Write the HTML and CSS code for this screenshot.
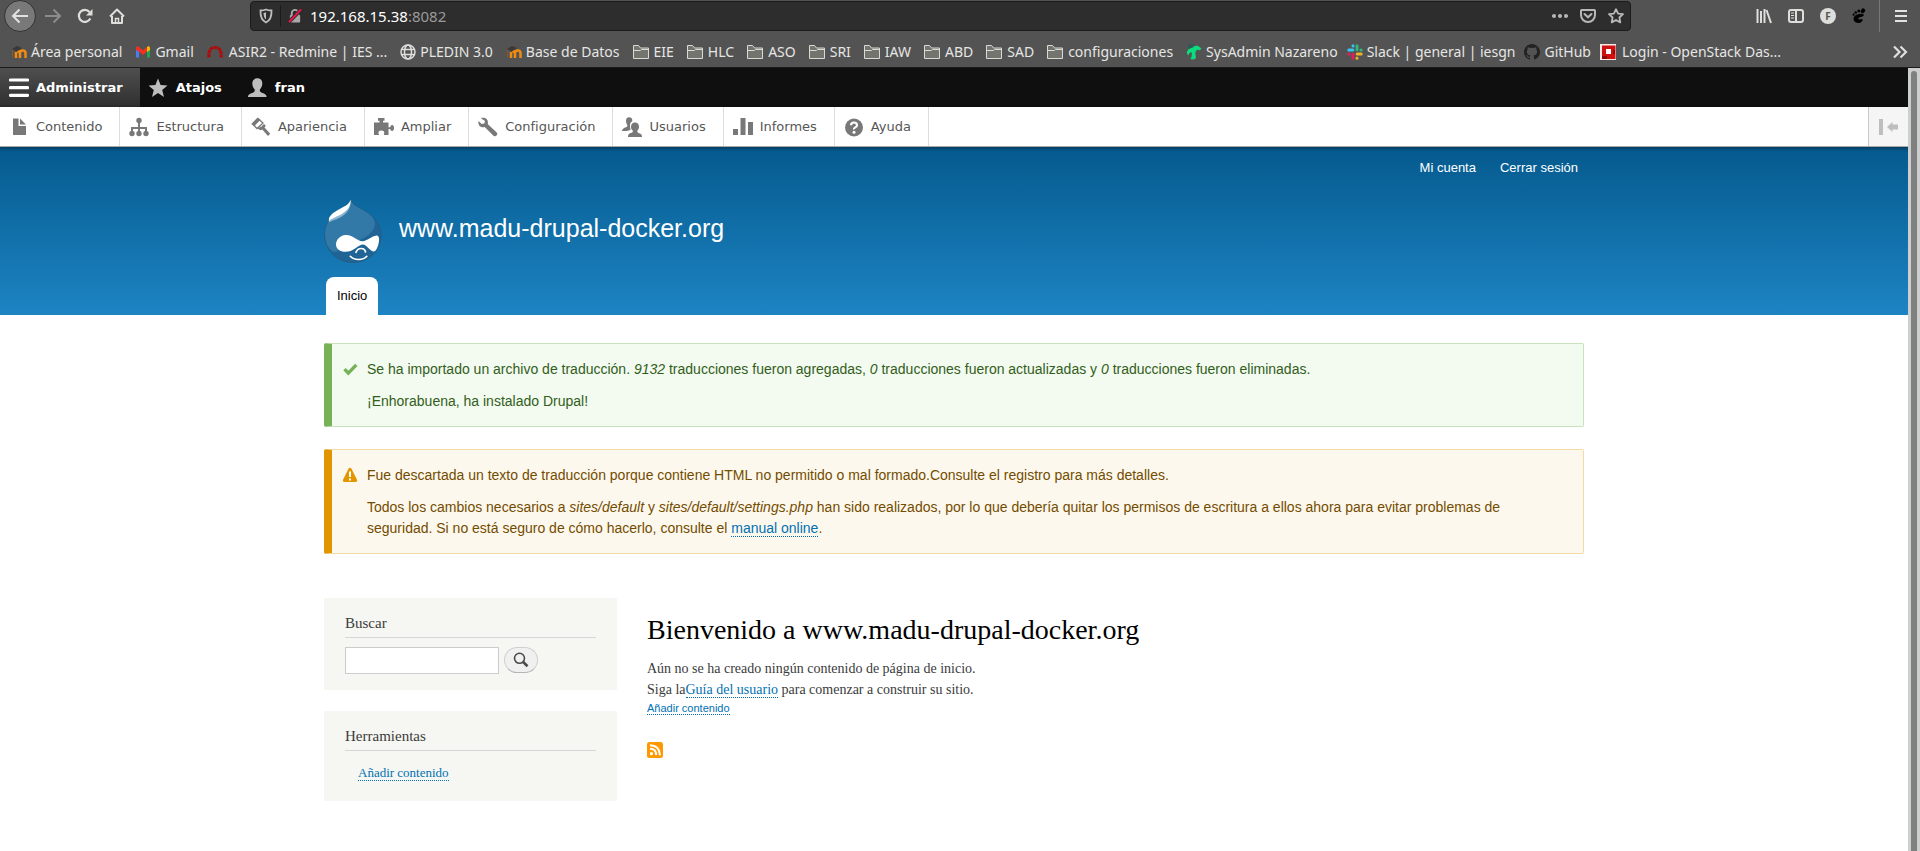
FILE: index.html
```html
<!DOCTYPE html>
<html lang="es">
<head>
<meta charset="utf-8">
<title>Bienvenido a www.madu-drupal-docker.org</title>
<link rel="stylesheet" href="styles.css">
</head>
<body>
<svg class="defs" aria-hidden="true">
  <symbol id="folder" viewBox="0 0 16 16"><path d="M.5 14.500v-13h5l2 2.500h8v10.500z" fill="#74746f" stroke="#d9d9d6"/><path d="M.5 6.500h7l1-1h7" fill="none" stroke="#d9d9d6"/></symbol>
  <symbol id="moodle" viewBox="0 0 16 16"><path d="M5 14V8M9 14V9q0-2.500 2.700-2.500T14.500 9v5M9 10q0-3-3-3" fill="none" stroke="#f28c0f" stroke-width="2.500"/><path d="M1 5l5-3 5 2-5 3.500z" fill="#3b3836"/><path d="M1.500 6v7" stroke="#8a5a25"/></symbol>
</svg>
<div class="browser">
  <div class="navbar">
    <div class="nav-buttons">
      <button class="back" aria-label="Atrás"><svg width="18" height="16" viewBox="0 0 18 16"><path d="M17 8H2M8.500 1.500L2 8l6.500 6.500" fill="none" stroke="#e2e2e0" stroke-width="2"/></svg></button>
      <button aria-label="Adelante"><svg width="18" height="16" viewBox="0 0 18 16"><path d="M1 8h15M9.500 1.500L16 8l-6.500 6.500" fill="none" stroke="#8b8b8b" stroke-width="2"/></svg></button>
      <button aria-label="Recargar"><svg width="16" height="16" viewBox="0 0 16 16"><path d="M13.300 10.500A6 6 0 1 1 12.500 4" fill="none" stroke="#dededc" stroke-width="2.200"/><path d="M15.500 1v6.500H9z" fill="#dededc"/></svg></button>
      <button aria-label="Inicio"><svg width="16" height="16" viewBox="0 0 16 16"><path d="M1 8.500L8 1.500l7 7M3 8v7h10V8" fill="none" stroke="#dededc" stroke-width="2" stroke-linejoin="round"/><path d="M6.500 15v-4.500h3V15" fill="none" stroke="#dededc" stroke-width="1.500"/></svg></button>
    </div>
    <div class="urlbar">
      <svg class="shield" width="14" height="16" viewBox="0 0 14 16"><path d="M7 1.500c2 1 4 1 5.500 1 .3 6-1.500 10-5.500 12C3 12.500 1.200 8.500 1.500 2.500c1.500 0 3.500 0 5.500-1z" fill="none" stroke="#bdbdbd" stroke-width="1.800"/><path d="M7 4.300c-1 .4-1.700.5-2.500.6.1 3 .9 5.300 2.500 6.600z" fill="#bdbdbd"/></svg>
      <svg class="lock" width="15" height="16" viewBox="0 0 15 16"><path d="M4 8V5a3.500 3.500 0 0 1 7 0v3" fill="none" stroke="#a8a8a8" stroke-width="2"/><rect x="2" y="7" width="11" height="8" rx="1" fill="#a8a8a8"/><path d="M1 14.500L14 1" stroke="#2d2d2d" stroke-width="4"/><path d="M1 14.500L14 1" stroke="#f5144a" stroke-width="2"/></svg>
      <div class="url" role="textbox" contenteditable="true" spellcheck="false" aria-label="Dirección">192.168.15.38<span class="port">:8082</span></div>
      <button aria-label="Más acciones"><svg width="16" height="16" viewBox="0 0 16 16"><g fill="#b9b9b9"><circle cx="2" cy="8" r="2"/><circle cx="8" cy="8" r="2"/><circle cx="14" cy="8" r="2"/></g></svg></button>
      <button aria-label="Pocket"><svg width="16" height="16" viewBox="0 0 16 16"><path d="M1.800 2h12.400q.8 0 .8.800V7A7 7 0 0 1 1 7V2.800q0-.8.800-.8z" fill="none" stroke="#b9b9b9" stroke-width="2"/><path d="M4.500 6L8 9.300 11.500 6" fill="none" stroke="#b9b9b9" stroke-width="2" stroke-linecap="round"/></svg></button>
      <button aria-label="Marcador"><svg width="16" height="16" viewBox="0 0 16 16"><path d="M8 1.200l2.100 4.400 4.900.6-3.600 3.300.9 4.900L8 12l-4.300 2.400.9-4.900L1 6.200l4.900-.6z" fill="none" stroke="#b9b9b9" stroke-width="1.800" stroke-linejoin="round"/></svg></button>
    </div>
    <div class="tools">
      <button aria-label="Biblioteca"><svg width="16" height="16" viewBox="0 0 16 16"><path d="M1.500 1v14M5 3v12M8.500 1v14M10.500 2l4.500 13" stroke="#dededc" stroke-width="2"/></svg></button>
      <button aria-label="Barra lateral"><svg width="16" height="16" viewBox="0 0 16 16"><rect x="1" y="2" width="14" height="12" rx="2" fill="none" stroke="#dededc" stroke-width="2"/><path d="M8 2v12" stroke="#dededc" stroke-width="2"/><path d="M3 5h3M3 7.500h3M3 10h3" stroke="#dededc"/></svg></button>
      <button class="account" aria-label="Cuenta">F</button>
      <button aria-label="GNOME"><svg width="14" height="16" viewBox="0 0 14 16"><path d="M11.500 6.300C10 5 4 5.500 2 9c-1.500 3 1 6 4.500 6 2.500 0 4.500-2 4-3.500-.5-1-2 .2-3.500-.2-1.500-.5-.5-2 2-2.300C11 8.700 12.500 7.500 11.500 6.300z" fill="#000"/><ellipse cx="11" cy="2.800" rx="2" ry="2.500" transform="rotate(30 11 2.800)" fill="#000"/><circle cx="6.800" cy="3" r="1.500" fill="#000"/><circle cx="3.700" cy="4.500" r="1.300" fill="#000"/><circle cx="1.600" cy="6.700" r="1.100" fill="#000"/></svg></button>
    </div>
    <button class="menu" aria-label="Menú"><svg width="12" height="14" viewBox="0 0 12 14"><path d="M0 2h12M0 7h12M0 12h12" stroke="#e2e2e0" stroke-width="2"/></svg></button>
  </div>
  <nav class="bookmarks" aria-label="Marcadores">
    <div class="group">
      <a href="#"><svg><use href="#moodle"/></svg>Área personal</a>
      <a href="#"><svg viewBox="0 0 16 16"><path d="M1 13.500V4l3 2v7.500z" fill="#4a7cf4"/><path d="M12 13.500V6l3-2v9.500z" fill="#16a850"/><path d="M1 6V3.500q1.500-2 3-.5l4 3.300 4-3.300v4.500L8 11 4 7.800z" fill="#ee3124"/><path d="M12 3q2-1.700 3 .5V6l-3 2z" fill="#fbbc04"/></svg>Gmail</a>
      <a class="wide" href="#"><svg viewBox="0 0 16 16"><path d="M2 13.500Q1 3.500 8 3.500t6 10" fill="none" stroke="#b00b0b" stroke-width="3.200" stroke-dasharray="3.500 .6"/></svg>ASIR2 - Redmine | IES ...</a>
      <a href="#"><svg viewBox="0 0 16 16" fill="none" stroke="#dededc" stroke-width="1.500"><circle cx="8" cy="8" r="7"/><ellipse cx="8" cy="8" rx="3.500" ry="7"/><path d="M1.500 5.500h13M1.500 10.500h13"/></svg>PLEDIN 3.0</a>
      <a href="#"><svg><use href="#moodle"/></svg>Base de Datos</a>
    </div>
    <div class="group folders">
      <a href="#"><svg><use href="#folder"/></svg>EIE</a>
      <a href="#"><svg><use href="#folder"/></svg>HLC</a>
      <a href="#"><svg><use href="#folder"/></svg>ASO</a>
      <a href="#"><svg><use href="#folder"/></svg>SRI</a>
      <a href="#"><svg><use href="#folder"/></svg>IAW</a>
      <a href="#"><svg><use href="#folder"/></svg>ABD</a>
      <a href="#"><svg><use href="#folder"/></svg>SAD</a>
      <a href="#"><svg><use href="#folder"/></svg>configuraciones</a>
    </div>
    <div class="group sites">
      <a href="#"><svg viewBox="0 0 16 16"><path d="M.8 9.500C1 6.500 3 4 6.500 3.800 8 1.500 12 .5 14 3.500l1.500 1-2 2-1.500-1c-2 .5-3 2.500-2.500 5l.5 3.500-2 1.500-4-.6 1.300-1.400C6 11 6 9.500 5.500 8L3 9.500l-.5 2z" fill="#0bdc7c"/><path d="M3 .5l2 1.800L7.500.5M2 3.500h3" fill="none" stroke="#17615c" stroke-width="1.500"/></svg>SysAdmin Nazareno</a>
      <a href="#"><svg viewBox="0 0 16 16" fill="none" stroke-width="3" stroke-linecap="round"><path d="M1.800 6h4M6 1.800v.3" stroke="#36c5f0"/><path d="M10 1.800v4M14.200 6h-.3" stroke="#2eb67d"/><path d="M14.200 10h-4M10 14.200v-.3" stroke="#ecb22e"/><path d="M6 14.200v-4M1.800 10h.3" stroke="#e01e5a"/></svg>Slack | general | iesgn</a>
      <a href="#"><svg viewBox="0 0 16 16"><path fill="#222" d="M8 0C3.600 0 0 3.600 0 8c0 3.500 2.300 6.500 5.500 7.600.4.100.5-.2.500-.4v-1.500c-2 .4-2.600-.5-2.800-1-.1-.2-.5-1-.8-1.100-.3-.2-.7-.5 0-.5.600 0 1.100.6 1.200.8.700 1.200 1.900.9 2.400.7.100-.5.300-.9.500-1.100C4.700 11.300 2.900 10.600 2.900 7.600c0-.9.300-1.600.8-2.100-.1-.2-.4-1 .1-2.200 0 0 .7-.2 2.200.8a7.500 7.500 0 0 1 4 0c1.500-1 2.200-.8 2.200-.8.400 1.100.2 2 .1 2.200.5.600.8 1.300.8 2.100 0 3.100-1.900 3.700-3.700 3.900.3.300.600.800.6 1.500v2.200c0 .2.100.5.500.4A8 8 0 0 0 8 0z"/></svg>GitHub</a>
      <a class="wide" href="#"><svg viewBox="0 0 16 16"><path d="M0 0h16v16H0z" fill="#f7e9e7"/><path d="M2 1.500h13.500V15H2z" fill="#cf1010"/><path d="M2 12h5v3H2zM13 6h2v4h-2z" fill="#8c0a0a"/><path d="M6 5h5v5H6z" fill="#fff"/></svg>Login - OpenStack Das...</a>
    </div>
    <button class="more" aria-label="Más marcadores"><svg viewBox="0 0 16 16"><path d="M2 2.500L7.500 8 2 13.500M8.500 2.500L14 8l-5.500 5.500" fill="none" stroke="#dededc" stroke-width="2.200"/></svg></button>
  </nav>
</div>
<div class="viewport">
  <div class="page">
    <nav class="toolbar" aria-label="Barra de administración">
      <a class="active" href="#"><svg viewBox="0 0 20 20"><path d="M1.500 2h17M1.500 9.700h17M1.500 17.300h17" stroke="#fff" stroke-width="3.200" stroke-linecap="round"/></svg>Administrar</a>
      <a href="#"><svg viewBox="0 0 20 20"><path d="M9 .5l2.600 6.600 6.900.4-5.300 4.400 1.800 7L9 15.100 3 18.900l1.800-7L-.5 7.500l6.900-.4z" fill="#bebebe"/></svg>Atajos</a>
      <a href="#"><svg viewBox="0 0 20 20"><path d="M9.300.3c3.300 0 5 2.200 5 5.200 0 2.600-1 4.500-2.300 5.700-.5 1.500 0 2.600 1.300 3.200 3 1.200 5.300 1.600 5.300 4.600H0c0-3 2.300-3.400 5.300-4.600 1.300-.6 1.800-1.700 1.300-3.200C5.300 10 4.300 8.100 4.300 5.500 4.300 2.500 6 .3 9.300.3z" fill="#bebebe"/></svg>fran</a>
    </nav>
    <nav class="tray" aria-label="Administración">
      <a href="#"><svg viewBox="0 0 20 20"><path d="M4 1.500h5.500V9H17v9H4z"/><path d="M11 1.500L17 7.500h-6z"/></svg>Contenido</a>
      <a href="#"><svg viewBox="0 0 20 20"><circle cx="10" cy="3.500" r="2.700"/><path d="M10 4v14M3 17v-6h14v6" fill="none" stroke="#787878" stroke-width="2"/><circle cx="3" cy="16.500" r="2.700"/><circle cx="10" cy="16.500" r="2.700"/><circle cx="17" cy="16.500" r="2.700"/></svg>Estructura</a>
      <a href="#"><svg viewBox="0 0 20 20"><path d="M7 1.500L12 6l-6 5.500-4.500-4.500z" fill="#fff" stroke="#787878" stroke-width="1.300"/><path d="M.3 7L6.500.8l3 2L3.500 9zM10.500 9.500L13 7l1.800 1.800-1.300 1.700 5.700 6.200-2.200 2.300-5.700-6.500-2 .7-3-2z"/></svg>Apariencia</a>
      <a href="#"><svg viewBox="0 0 20 20"><path d="M0 5.500h5.500V3.800H4V1h6.500v2.800H9v1.700h5.500v4.700h1.700q.3-2.200 2-2.200T20 11t-1.800 3-2-2h-1.700v6H9.800q1.500-4.500-2.500-4.500T5 18H0z"/></svg>Ampliar</a>
      <a href="#"><svg viewBox="0 0 20 20"><path d="M3 1.300C7-.5 11 3 9.700 7l9 8.500q1.200 1.500-.2 3t-3 .2L6.700 10C3 11.500-.5 8 .6 4l3 3 2.700-.6L7 4z"/></svg>Configuración</a>
      <a href="#"><svg viewBox="0 0 20 20"><path d="M7 .3c2.500 0 3.500 1.500 3.300 4q-2.500 1-2.300 4.500 0 2 .7 4L5 14H0q0-2.500 4.500-4 1.500-.7.700-2Q4 6.500 4 3.800 4 .3 7 .3z"/><path d="M13 5.500c2.700 0 4 1.600 4 4.300 0 2-.8 3-1.500 3.700-.5 1.300 0 2 1 2.500 2 .7 3.500 1 3.500 4H6c0-3 1.500-3.500 3.500-4.200 1-.4 1.700-1 1.200-2.300C10 12.800 9 12 9 9.800c0-2.700 1.300-4.300 4-4.300z"/></svg>Usuarios</a>
      <a href="#"><svg viewBox="0 0 20 20"><path d="M0 12h5v6H0zM7.500 1h5v17h-5zM15 5h5v13h-5z"/></svg>Informes</a>
      <a href="#"><svg viewBox="0 0 20 20"><circle cx="10" cy="10.500" r="9"/><path d="M7 8.300Q7 5.500 10 5.500t3 2.700q0 1.300-1.700 2.200T10 12.300" fill="none" stroke="#fff" stroke-width="2.200"/><circle cx="10" cy="15.200" r="1.500" fill="#fff"/></svg>Ayuda</a>
      <button class="orient" aria-label="Orientación vertical"><svg viewBox="0 0 20 16"><path d="M0 0h4v16H0zM8 8l5.500-5v2.500H19v5h-5.500V13z" fill="#bebebe"/></svg></button>
    </nav>
    <header class="site-header">
      <div class="container">
        <nav class="user-menu" aria-label="Cuenta de usuario"><a href="#">Mi cuenta</a><a href="#">Cerrar sesión</a></nav>
        <div class="branding">
          <svg class="logo" viewBox="0 0 58 64" role="img" aria-label="Inicio">
            <path d="M26.700.5C28 5 32 7.500 38 10.500 48 16 57 23.500 57 36.500 57 52 44.500 63.500 29 63.500S.7 51.500.7 36C.7 27 5 20 12 15.500 19 11 26 8 26.700.5z" fill="#1f6495" stroke="#285a7d" stroke-width=".8"/>
            <path d="M26.700 1C28 5 32 7.500 38 10.500 45 14 50.500 19 51 24 51 34 40 40 30 43 18 47 15 51 13 52.500 7 55 1 45 1 36 1 27 5 20 12 15.500 19 11 26 8 26.700 1z" fill="#3379a8"/>
            <path d="M26.600 1.500c.3 7-2.600 11.500-8 15.500C13 21 8 21 5 23.500c-1-4 3-8 8-11C19 9 25.500 7 26.600 1.500z" fill="#8db4d0"/>
            <path d="M26.600.3C27 7 24 11 18.500 14.500 13 18 8 19 5 22c-1-4 3-7.500 8-10.500C19 8 25.500 6 26.600.3z" fill="#fff"/>
            <path d="M21.500 36c7.500-.5 12 6.500 17 6.300C43 42 48 37 52.500 36.500c3-.2 3 4.500 2 8.500s-3 8-5 7.500c-4-1-7-6.800-10.500-7-5 0-9 7.300-17.500 7.300C16 52.800 12 50 12 45.500S16 36.300 21.500 36z" fill="#fff"/>
            <path d="M32 53.300c2-5 8.500-5 9.500-.3M26.300 57.300c4 4.500 13 4 16.500 0" fill="none" stroke="#fff" stroke-width="1.700" stroke-linecap="round"/>
          </svg>
          <a class="site-name" href="#">www.madu-drupal-docker.org</a>
        </div>
        <nav class="main-menu" aria-label="Navegación principal"><a href="#">Inicio</a></nav>
      </div>
    </header>
    <main class="container">
      <div class="message status" role="status">
        <svg viewBox="0 0 16 16"><path d="M2.500 8.200l3.800 4 8-8.400" fill="none" stroke="#73b355" stroke-width="3.300"/></svg>
        <div>
          <p>Se ha importado un archivo de traducción. <em>9132</em> traducciones fueron agregadas, <em>0</em> traducciones fueron actualizadas y <em>0</em> traducciones fueron eliminadas.</p>
          <p>¡Enhorabuena, ha instalado Drupal!</p>
        </div>
      </div>
      <div class="message warning" role="alert">
        <svg viewBox="0 0 16 16"><path d="M8 .8q1 0 1.500 1l5.500 11q.7 1.900-1 2.200H2q-1.700-.3-1-2.200l5.500-11q.5-1 1.500-1z" fill="#e29700"/><path d="M7 4.500h2V10H7zM7 11.500h2v2H7z" fill="#fff"/></svg>
        <div>
          <p>Fue descartada un texto de traducción porque contiene HTML no permitido o mal formado.Consulte el registro para más detalles.</p>
          <p>Todos los cambios necesarios a <em>sites/default</em> y <em>sites/default/settings.php</em> han sido realizados, por lo que debería quitar los permisos de escritura a ellos ahora para evitar problemas de seguridad. Si no está seguro de cómo hacerlo, consulte el <a class="link" href="#">manual online</a>.</p>
        </div>
      </div>
      <div class="columns">
        <aside class="sidebar">
          <section class="block">
            <h2><label for="search">Buscar</label></h2>
            <form class="search">
              <input type="search" id="search">
              <button type="button" aria-label="Buscar"><svg viewBox="0 0 16 16"><circle cx="6.500" cy="6.300" r="5" fill="none" stroke="#4a4a4a" stroke-width="1.600"/><path d="M10 9.800l4.500 4.400" stroke="#4a4a4a" stroke-width="2.600"/></svg></button>
            </form>
          </section>
          <section class="block tools-block">
            <h2>Herramientas</h2>
            <ul><li><a class="link" href="#">Añadir contenido</a></li></ul>
          </section>
        </aside>
        <article class="content">
          <h1>Bienvenido a www.madu-drupal-docker.org</h1>
          <p>Aún no se ha creado ningún contenido de página de inicio.<br>Siga la<a class="link" href="#">Guía del usuario</a> para comenzar a construir su sitio.</p>
          <div class="action"><a class="link" href="#">Añadir contenido</a></div>
          <a class="feed" href="#" aria-label="Suscribirse"><svg viewBox="0 0 16 16"><rect width="16" height="16" rx="2.500" fill="#ff9900"/><circle cx="4.500" cy="11.700" r="1.600" fill="#fff"/><path d="M3 6.800q6 0 6.300 6.300M3 3.200q9.600.2 10 10" fill="none" stroke="#fff" stroke-width="2"/></svg></a>
        </article>
      </div>
    </main>
  </div>
  <div class="scroll-track" aria-hidden="true"><div class="scroll-thumb"></div></div>
</div>
</body>
</html>
```
FILE: styles.css
```css
* { box-sizing: border-box; }
html, body { height: 100%; }
body {
  margin: 0;
  display: flex;
  flex-direction: column;
  background: #fff;
  color: #3b3b3b;
  font: 14px/21px "Liberation Serif", serif;
}
a { color: inherit; text-decoration: none; }
button { border: 0; padding: 0; background: none; font: inherit; color: inherit; }
svg { display: block; flex: none; }
p, h1, h2, ul { margin: 0; padding: 0; font-weight: normal; }
ul { list-style: none; }
.defs { position: absolute; width: 0; height: 0; }

/* Browser frame */
.browser {
  background: #535353;
  color: #e6e6e4;
  border-bottom: 1px solid #1b1b1b;
  font: 14px/20px "Noto Sans", sans-serif;
}
.navbar { display: flex; height: 33px; align-items: flex-start; }
.nav-buttons { display: flex; width: 250px; padding-left: 4px; }
.nav-buttons button { width: 32px; height: 32px; display: grid; place-items: center; }
.nav-buttons .back { margin-right: 1px; border: 1px solid #333; border-radius: 50%; background: #797979; }
.urlbar {
  flex: 1;
  display: flex;
  align-items: center;
  height: 30px;
  margin-top: 1px;
  padding: 0 6px 0 8px;
  border: 1px solid #1b1b1b;
  border-radius: 4px;
  background: #2d2d2d;
}
.shield { margin-right: 7px; }
.lock { margin-right: 8px; }
.shield + .lock { border-left: 1px solid #1b1b1b; padding-left: 7px; width: 22px; height: 22px; }
.url { flex: 1; color: #fff; font-size: 15px; }
.port { color: #9a9a9a; }
.urlbar button { margin-left: 12px; }
.tools { display: flex; align-items: center; gap: 16px; height: 32px; padding: 0 13px 0 125px; }
.tools .account {
  width: 16px;
  height: 16px;
  border-radius: 50%;
  background: #dededc;
  color: #535353;
  font-size: 10px;
  font-weight: bold;
  line-height: 16px;
}
.menu { display: flex; align-items: center; height: 32px; border-left: 1px solid #777; padding: 0 13px 0 15px; }
.bookmarks { display: flex; align-items: center; gap: 13px; height: 34px; padding: 3px 12px 0 11px; white-space: nowrap; }
.group { display: flex; gap: 13px; }
.group a { display: flex; align-items: center; gap: 4px; }
.folders a { gap: 5px; }
.sites { gap: 9px; }
.group .wide { gap: 6px; }
.bookmarks svg { width: 16px; height: 16px; }
.more { margin-left: auto; }

.viewport { flex: 1; display: flex; min-height: 0; }
.page { flex: 1; min-width: 0; background: #fff; overflow: hidden; }
.scroll-track { width: 12px; padding: 3px 3px 0; background: #cecece; }
.scroll-thumb { height: 100%; border-radius: 3px 3px 0 0; background: #7e8180; }

/* Administration toolbar */
.toolbar, .tray { display: flex; font: 13px/39px "DejaVu Sans", sans-serif; }
.toolbar { background: #0f0f0f; color: #fff; font-weight: bold; }
.toolbar a, .tray a { display: flex; align-items: center; gap: 7px; padding: 0 17px 0 9px; }
.toolbar svg, .tray svg { width: 20px; height: 20px; fill: #787878; }
.toolbar .active { background: linear-gradient(#4f4f4f, #2f2f2f); }
.tray {
  position: relative;
  background: #fff;
  color: #565656;
  border-bottom: 1px solid #aaa;
  box-shadow: 0 1px 3px 1px rgba(0, 0, 0, .33);
}
.tray a { border-right: 1px solid #ddd; }
.tray .orient { display: grid; place-items: center; width: 40px; margin-left: auto; border-left: 1px solid #c9c9c9; background: #f5f5f5; }
.tray .orient svg { height: 16px; }

/* Site header */
.container { max-width: 1290px; margin: 0 auto; padding: 0 15px; }
.site-header { background: linear-gradient(#055a8e, #1d84c3); font-family: "Liberation Sans", sans-serif; color: #fff; }
.user-menu { display: flex; justify-content: flex-end; gap: 24px; padding: 10px 6px 0; font-size: 13px; }
.branding { display: flex; align-items: center; gap: 17px; padding: 21px 0 14px; }
.logo { width: 58px; height: 64px; }
.site-name { font-size: 25px; line-height: 30px; padding-bottom: 6px; }
.main-menu { display: flex; padding-left: 2px; }
.main-menu a { padding: 0 11px; border-radius: 8px 8px 0 0; background: #fff; color: #000; font-size: 13px; line-height: 38px; }

/* Messages */
.message {
  display: flex;
  gap: 9px;
  margin-top: 22px;
  padding: 15px 64px 14px 10px;
  border: 1px solid;
  border-left-width: 8px;
  border-radius: 2px;
  font-family: "Liberation Sans", sans-serif;
}
.message:first-child { margin-top: 28px; }
.message svg { width: 16px; height: 16px; margin-top: 2px; }
.message p + p { margin-top: 11px; }
.status { background: #f3faef; border-color: #c9e1bd #c9e1bd #c9e1bd #77b259; color: #325e1c; }
.warning { background: #fdf8ed; border-color: #f4daa6 #f4daa6 #f4daa6 #e09600; color: #734c00; }
.link { color: #0071b3; border-bottom: 1px dotted #0071b3; }

/* Columns */
.columns { display: flex; gap: 30px; margin-top: 44px; }
.sidebar { width: 293px; flex: none; }
.block { padding: 15px 21px 16px; background: #f6f6f2; margin-bottom: 21px; }
.block h2 { padding-bottom: 3px; border-bottom: 1px solid #d6d6d6; font-size: 15px; }
.search { display: flex; gap: 5px; margin-top: 9px; }
.search input { width: 154px; height: 27px; margin: 0; border: 1px solid #ccc; background: #fff; }
.search button {
  display: grid;
  place-items: center;
  width: 34px;
  height: 26px;
  border: 1px solid #d0d0d0;
  border-bottom-color: #b4b4b4;
  border-radius: 13px;
  background: #f0f0f0;
}
.search svg { width: 16px; height: 16px; }
.tools-block ul { padding: 11px 13px 2px; font-size: 13px; }
.content { flex: 1; padding-top: 15px; }
.content h1 { color: #000; font-size: 28px; line-height: 34px; margin-bottom: 11px; }
.action { font: 11px/16px "Liberation Sans", sans-serif; }
.feed { display: inline-block; margin-top: 26px; }
.feed svg { width: 16px; height: 16px; }
```
